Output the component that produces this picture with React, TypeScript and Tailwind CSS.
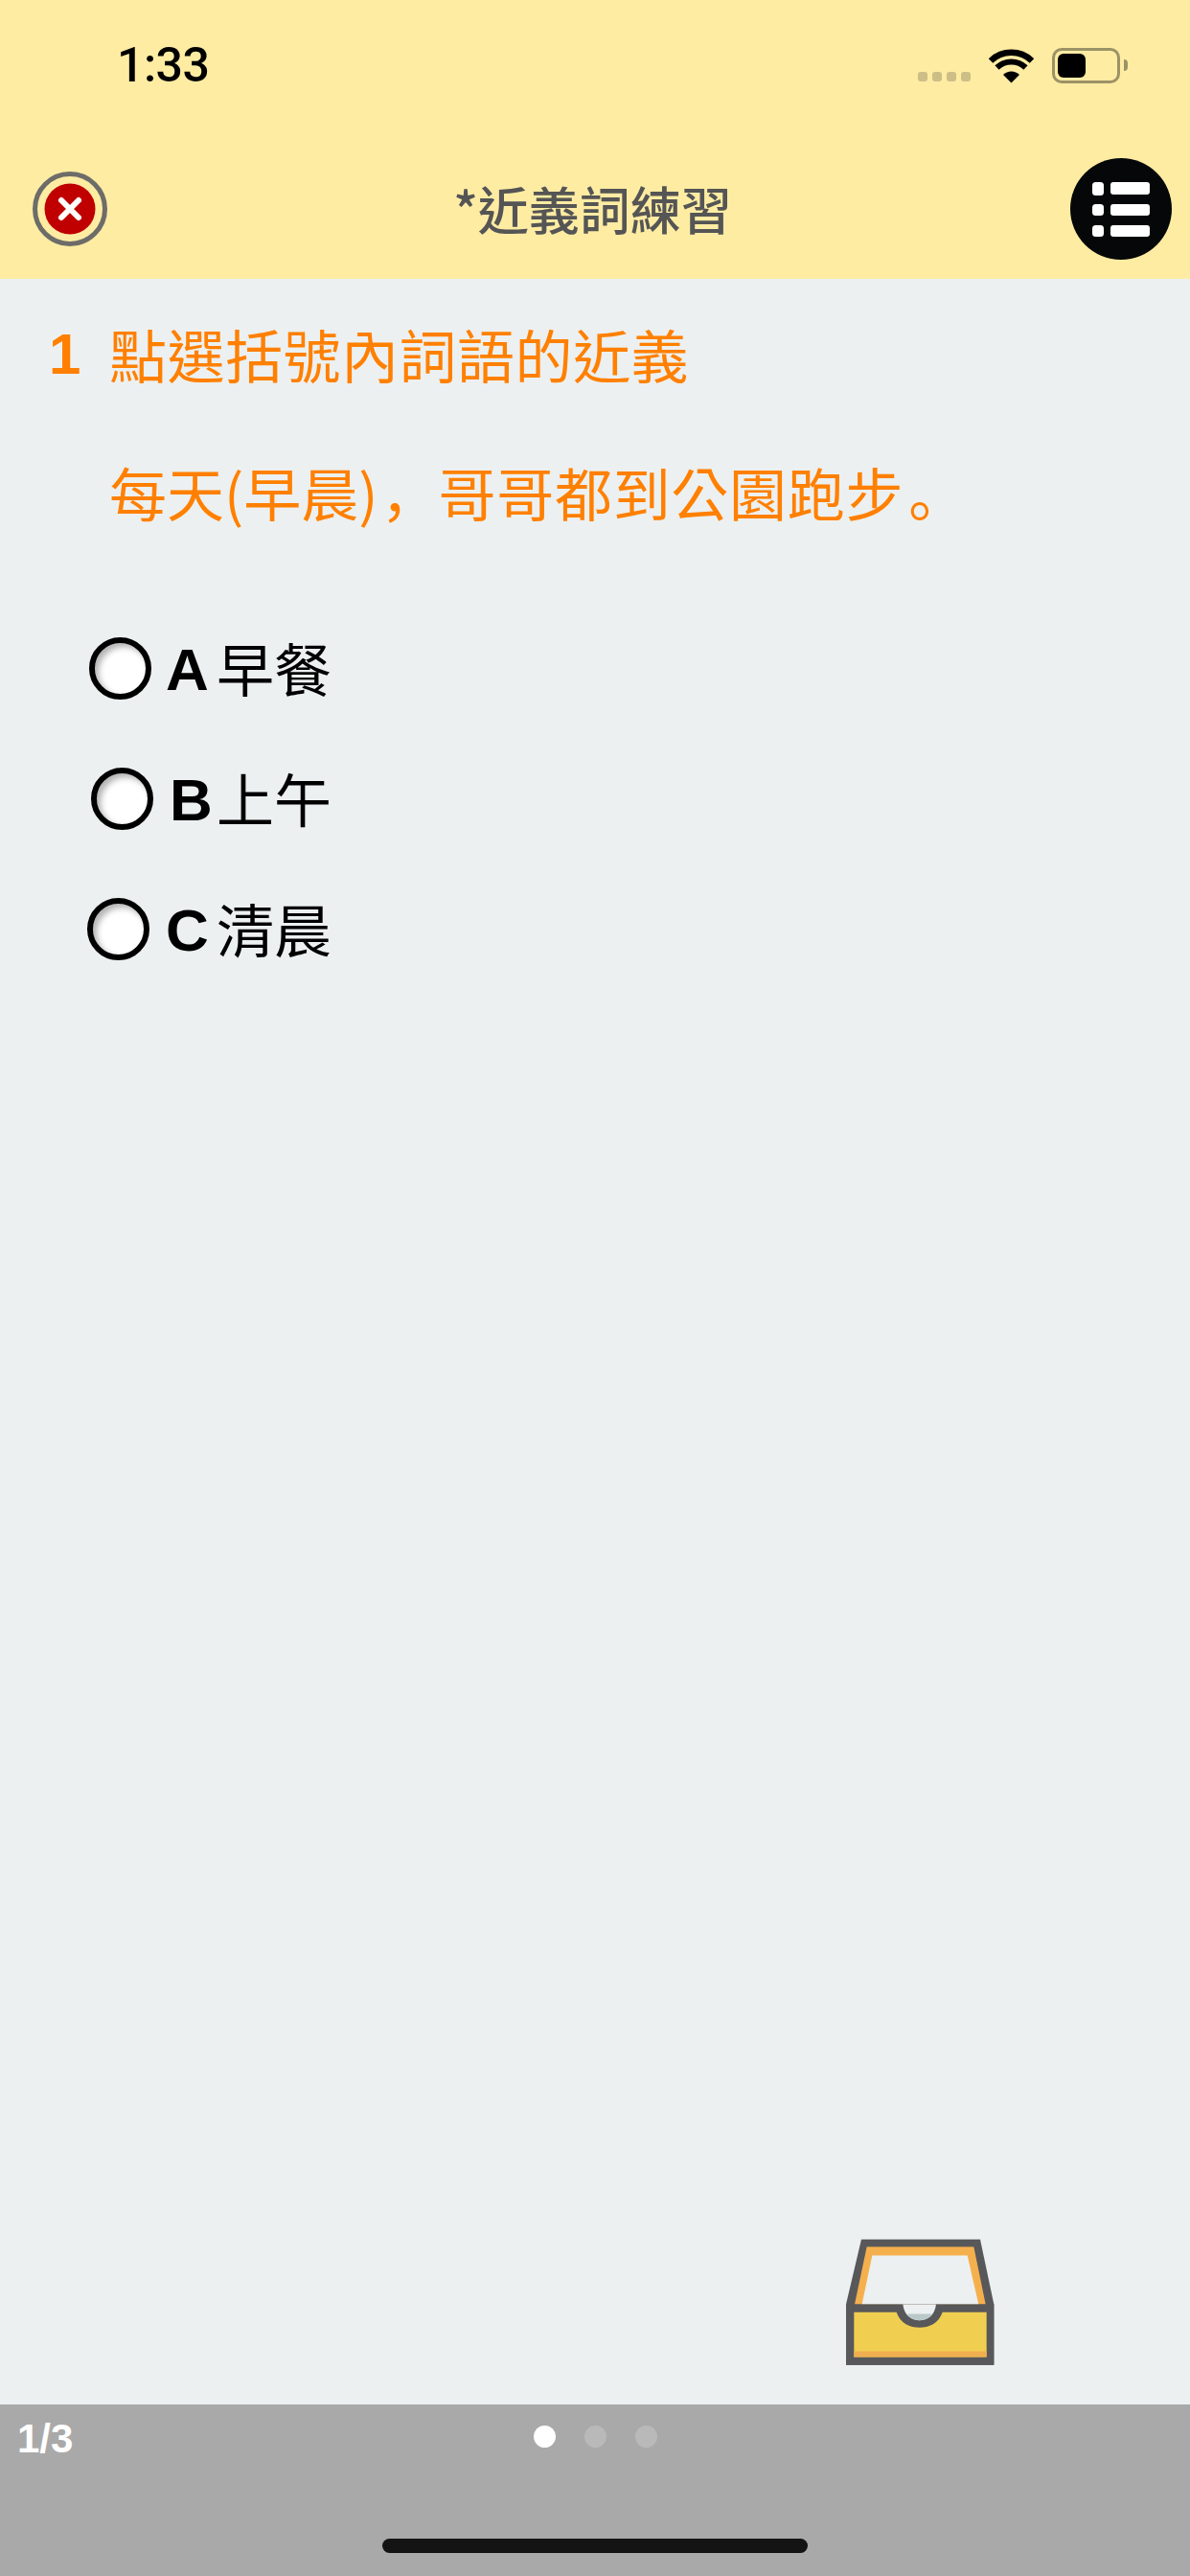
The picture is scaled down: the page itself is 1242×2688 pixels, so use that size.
const cjk = "font-['Noto_Sans_CJK_TC','Liberation_Sans',sans-serif]";

const options = [
  { letter: "A", text: "早餐", radio: "ml-[93px]", gap: "w-[68px] pl-[15px]", row: "mt-[122px]" },
  { letter: "B", text: "上午", radio: "ml-[95px]", gap: "w-[66px] pl-[17px]", row: "mt-[71px]" },
  { letter: "C", text: "清晨", radio: "ml-[91px]", gap: "w-[70px] pl-[17px]", row: "mt-[71px]" },
];

function StatusBar() {
  return (
    <div className="mt-[49px] flex h-[38px] items-center justify-between pl-[122px] pr-[65px]">
      <span className="font-['Roboto',sans-serif] text-[50px] leading-[38px] font-medium tracking-[-0.5px] text-black">1:33</span>
      <div className="flex items-end">
        <div className="mb-[2px] flex gap-[5px]">
          <i className="h-[10px] w-[10px] rounded-[3px] bg-[#ccbe86]" />
          <i className="h-[10px] w-[10px] rounded-[3px] bg-[#ccbe86]" />
          <i className="h-[10px] w-[10px] rounded-[3px] bg-[#ccbe86]" />
          <i className="h-[10px] w-[10px] rounded-[3px] bg-[#ccbe86]" />
        </div>
        <svg className="ml-[19px]" width="47" height="37" viewBox="0 0 47 37">
          <path d="M23.5 36.5 L15 28 A12 12 0 0 1 32 28 Z" fill="#000" />
          <path d="M8.5 20.5 A21.5 21.5 0 0 1 38.5 20.5" fill="none" stroke="#000" strokeWidth="6" />
          <path d="M2 13.5 A31 31 0 0 1 45 13.5" fill="none" stroke="#000" strokeWidth="6.5" />
        </svg>
        <div className="ml-[19px] flex items-center">
          <div className="h-[37px] w-[71px] rounded-[10px] border-[3px] border-[#9c9266] p-[3px]">
            <div className="h-full w-[29px] rounded-[6px] bg-black" />
          </div>
          <div className="ml-[4px] h-[12px] w-[4px] rounded-r-full bg-[#9c9266]" />
        </div>
      </div>
    </div>
  );
}

function CloseIcon() {
  return (
    <svg width="78" height="78" viewBox="0 0 78 78">
      <circle cx="39" cy="39" r="36.5" fill="none" stroke="#6d6c68" strokeWidth="5" />
      <circle cx="39" cy="39" r="26.5" fill="#c00000" />
      <path d="M30 30 L48 48 M48 30 L30 48" stroke="#fff" strokeWidth="6" strokeLinecap="round" />
    </svg>
  );
}

function MenuIcon() {
  return (
    <svg width="106" height="106" viewBox="0 0 106 106">
      <circle cx="53" cy="53" r="53" fill="#050708" />
      <rect x="23" y="25" width="12" height="14" rx="3.5" fill="#fff" />
      <rect x="42" y="25" width="41" height="13" rx="3" fill="#fff" />
      <rect x="23" y="48" width="12" height="12" rx="3.5" fill="#fff" />
      <rect x="42" y="48" width="41" height="12" rx="3" fill="#fff" />
      <rect x="23" y="70" width="12" height="12" rx="3.5" fill="#fff" />
      <rect x="42" y="70" width="41" height="12" rx="3" fill="#fff" />
    </svg>
  );
}

function InboxIcon() {
  return (
    <svg width="155" height="132" viewBox="70 80 465 395">
      <path d="M118 82 H490 L533 285 V475 H70 V285 Z" fill="#58585a" />
      <path d="M135 105 H470 L507 285 H97 Z" fill="#f5b04e" />
      <path d="M152 132 H450 L485 285 H120 Z" fill="#ecf0f1" />
      <rect x="70" y="285" width="463" height="190" fill="#58585a" />
      <path d="M248 285 C252 320 275 335 300 335 C325 335 348 320 352 285 Z" fill="#ecf0f1" />
      <path d="M262 315 H340 C330 330 315 335 300 335 C285 335 270 330 262 315 Z" fill="#b9c9c9" />
      <path d="M95 310 H228 C240 345 270 358 300 358 C330 358 360 345 372 310 H510 V450 H95 Z" fill="#f0cf50" />
      <rect x="95" y="432" width="415" height="18" fill="#f0ae50" />
    </svg>
  );
}

export default function App() {
  return (
    <div className={`flex h-[2688px] w-[1242px] flex-col overflow-hidden bg-[#ecf0f1] ${cjk}`}>
      <header className="h-[291px] bg-[#feeca3]">
        <StatusBar />
        <div className="mt-[78px] flex h-[106px] items-center justify-between pl-[34px] pr-[19px]">
          <CloseIcon />
          <h1 className="-mt-[2px] ml-[8px] text-[53px] leading-[60px] font-medium text-[#555555]">*近義詞練習</h1>
          <MenuIcon />
        </div>
      </header>

      <main className="flex flex-1 flex-col">
        <div className="mt-[46px] flex items-center text-[60px] leading-[60px] text-[#ff8000]">
          <span className="mt-[3px] w-[114px] pl-[51px] font-['Liberation_Sans',sans-serif] font-bold">1</span>
          <span className="tracking-[0.5px]">點選括號內詞語的近義</span>
        </div>
        <p className="mt-[83px] pl-[114px] text-[60px] leading-[60px] text-[#ff8000]">
          每天(早晨)
          <span className="ml-[3px] font-['Noto_Sans_CJK_SC',sans-serif]">，</span>
          <span className="tracking-[0.7px]">哥哥都到公園跑步</span>
          <span className="ml-[5px] font-['Noto_Sans_CJK_SC',sans-serif]">。</span>
        </p>

        {options.map((o) => (
          <div key={o.letter} className={`${o.row} flex h-[65px] items-center text-black`}>
            <div className={`${o.radio} h-[65px] w-[65px] shrink-0 rounded-full border-[6px] border-black bg-white shadow-[inset_4px_4px_6px_rgba(0,0,0,0.3)]`} />
            <span className={`${o.gap} mt-[1px] shrink-0 font-['Liberation_Sans',sans-serif] text-[62px] leading-[65px] font-bold`}>{o.letter}</span>
            <span className="-mt-[5px] text-[60px] leading-[65px]">{o.text}</span>
          </div>
        ))}

        <div className="mt-auto mb-[41px] mr-[204px] self-end">
          <InboxIcon />
        </div>
      </main>

      <footer className="h-[179px] bg-[#a9a9a9]">
        <div className="grid grid-cols-[1fr_auto_1fr] pt-[14px]">
          <span className="pl-[18px] font-['Liberation_Sans',sans-serif] text-[42px] leading-[44px] font-bold text-white">1/3</span>
          <div className="mt-[8px] flex h-[23px] gap-[30px]">
            <i className="h-[23px] w-[23px] rounded-full bg-white" />
            <i className="h-[23px] w-[23px] rounded-full bg-[#b9b9b9]" />
            <i className="h-[23px] w-[23px] rounded-full bg-[#b9b9b9]" />
          </div>
        </div>
        <div className="mx-auto mt-[82px] h-[15px] w-[444px] rounded-full bg-[#141414]" />
      </footer>
    </div>
  );
}
